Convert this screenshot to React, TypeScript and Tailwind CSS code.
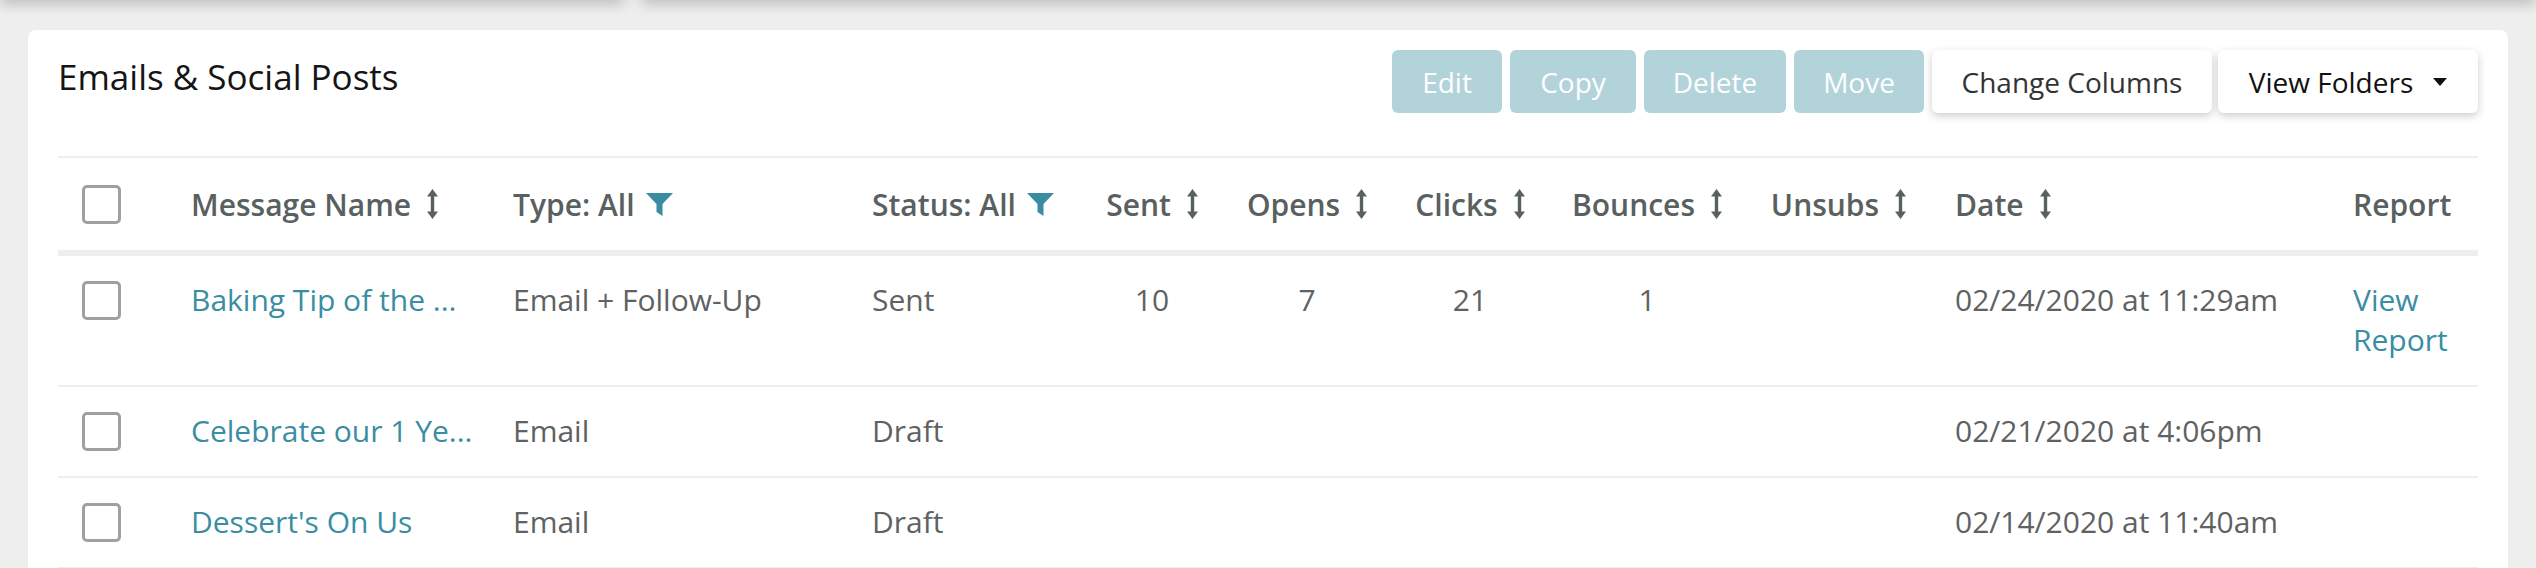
import React from 'react';

const font = { fontFamily: '"Open Sans", "Noto Sans", sans-serif' };

const cols = 'grid grid-cols-[109px_322px_359px_234px_140px_170px_156px_198px_185px_398px_149px]';

const SortIcon = () => (
  <svg width="11" height="30" viewBox="0 0 11 30" className="ml-[16px] shrink-0 fill-[#596060]">
    <polygon points="5.5,0 11,7.5 0,7.5" />
    <rect x="3.8" y="6" width="3.4" height="18" />
    <polygon points="0,22.5 11,22.5 5.5,30" />
  </svg>
);

const FilterIcon = () => (
  <svg width="27" height="23" viewBox="0 0 27 23" className="ml-[11px] shrink-0 fill-[#3a8ca3]">
    <polygon points="0,0 27,0 16.5,11 16.5,23 10.5,19 10.5,11" />
  </svg>
);

const Checkbox = () => (
  <div className="w-[39px] h-[39px] rounded-[5px] border-[3px] border-[#a0a0a0] bg-white" />
);

type Row = {
  name: string;
  type: string;
  status: string;
  sent?: string;
  opens?: string;
  clicks?: string;
  bounces?: string;
  unsubs?: string;
  date: string;
  report?: boolean;
};

const rows: Row[] = [
  {
    name: 'Baking Tip of the ...',
    type: 'Email + Follow-Up',
    status: 'Sent',
    sent: '10',
    opens: '7',
    clicks: '21',
    bounces: '1',
    date: '02/24/2020 at 11:29am',
    report: true,
  },
  { name: 'Celebrate our 1 Ye...', type: 'Email', status: 'Draft', date: '02/21/2020 at 4:06pm' },
  { name: "Dessert's On Us", type: 'Email', status: 'Draft', date: '02/14/2020 at 11:40am' },
];

const actions = [
  { label: 'Edit', w: 'w-[110px]' },
  { label: 'Copy', w: 'w-[126px]' },
  { label: 'Delete', w: 'w-[142px]' },
  { label: 'Move', w: 'w-[130px]' },
];

const HeadCell = ({ label, sort, filter, center }: { label: string; sort?: boolean; filter?: boolean; center?: boolean }) => (
  <div className={`px-[24px] flex items-center whitespace-nowrap ${center ? 'justify-center' : ''}`}>
    <span>{label}</span>
    {sort && <SortIcon />}
    {filter && <FilterIcon />}
  </div>
);

export default function App() {
  return (
    <div className="min-h-[568px] bg-[#eeeeee] overflow-hidden" style={font}>
      {/* bottom edges of the panels above */}
      <div className="flex gap-[18px]">
        <div className="w-[624px] h-[12px] -mt-[12px] bg-white shadow-[0_3px_14px_rgba(0,0,0,0.25)]" />
        <div className="flex-1 h-[12px] -mt-[12px] bg-white shadow-[0_3px_14px_rgba(0,0,0,0.25)]" />
      </div>

      <div className="mx-[28px] mt-[30px] bg-white rounded-[8px] px-[30px] pt-[20px] min-h-[560px]">
        <div className="flex items-start justify-between">
          <h1 className="mt-[4px] text-[35px] leading-[46px] text-[#151515]">Emails &amp; Social Posts</h1>
          <div className="flex gap-[8px] text-[28px] leading-none">
            {actions.map((b) => (
              <button key={b.label} className={`${b.w} h-[63px] rounded-[6px] bg-[#b3d3db] text-white flex items-center justify-center`}>
                {b.label}
              </button>
            ))}
            <button className="w-[280px] h-[63px] rounded-[6px] bg-white text-[#333333] shadow-[0_3px_8px_rgba(0,0,0,0.2)] flex items-center justify-center">
              Change Columns
            </button>
            <button className="w-[260px] h-[63px] ml-[-2px] rounded-[6px] bg-white text-[#111111] shadow-[0_3px_8px_rgba(0,0,0,0.2)] flex items-center justify-center">
              View Folders
              <svg width="14" height="8" viewBox="0 0 14 8" className="ml-[20px] fill-[#111111]">
                <polygon points="0,0 14,0 7,8" />
              </svg>
            </button>
          </div>
        </div>

        <div className="mt-[43px] border-t-[2px] border-[#eeeeee]">
          <div className={`${cols} h-[98px] items-center border-b-[6px] border-[#eceef0] text-[30px] font-semibold text-[#596060]`}>
            <div className="px-[24px] flex items-center">
              <Checkbox />
            </div>
            <HeadCell label="Message Name" sort />
            <HeadCell label="Type: All" filter />
            <HeadCell label="Status: All" filter />
            <HeadCell label="Sent" sort center />
            <HeadCell label="Opens" sort center />
            <HeadCell label="Clicks" sort center />
            <HeadCell label="Bounces" sort center />
            <HeadCell label="Unsubs" sort center />
            <HeadCell label="Date" sort />
            <HeadCell label="Report" />
          </div>

          {rows.map((r) => (
            <div
              key={r.name}
              className={`${cols} items-start pt-[24px] pb-[25px] border-b-[2px] border-[#eeeeee] text-[30px] leading-[40px] text-[#5e6262]`}
            >
              <div className="px-[24px] pt-[1px]">
                <Checkbox />
              </div>
              <div className="px-[24px] whitespace-nowrap text-[#3a8da2]">{r.name}</div>
              <div className="px-[24px] whitespace-nowrap">{r.type}</div>
              <div className="px-[24px]">{r.status}</div>
              <div className="px-[24px] text-center">{r.sent}</div>
              <div className="px-[24px] text-center">{r.opens}</div>
              <div className="px-[24px] text-center">{r.clicks}</div>
              <div className="px-[24px] text-center">{r.bounces}</div>
              <div className="px-[24px] text-center">{r.unsubs}</div>
              <div className="px-[24px] whitespace-nowrap">{r.date}</div>
              <div className="px-[24px] text-[#3a8da2]">{r.report ? 'View Report' : ''}</div>
            </div>
          ))}
        </div>
      </div>
    </div>
  );
}
